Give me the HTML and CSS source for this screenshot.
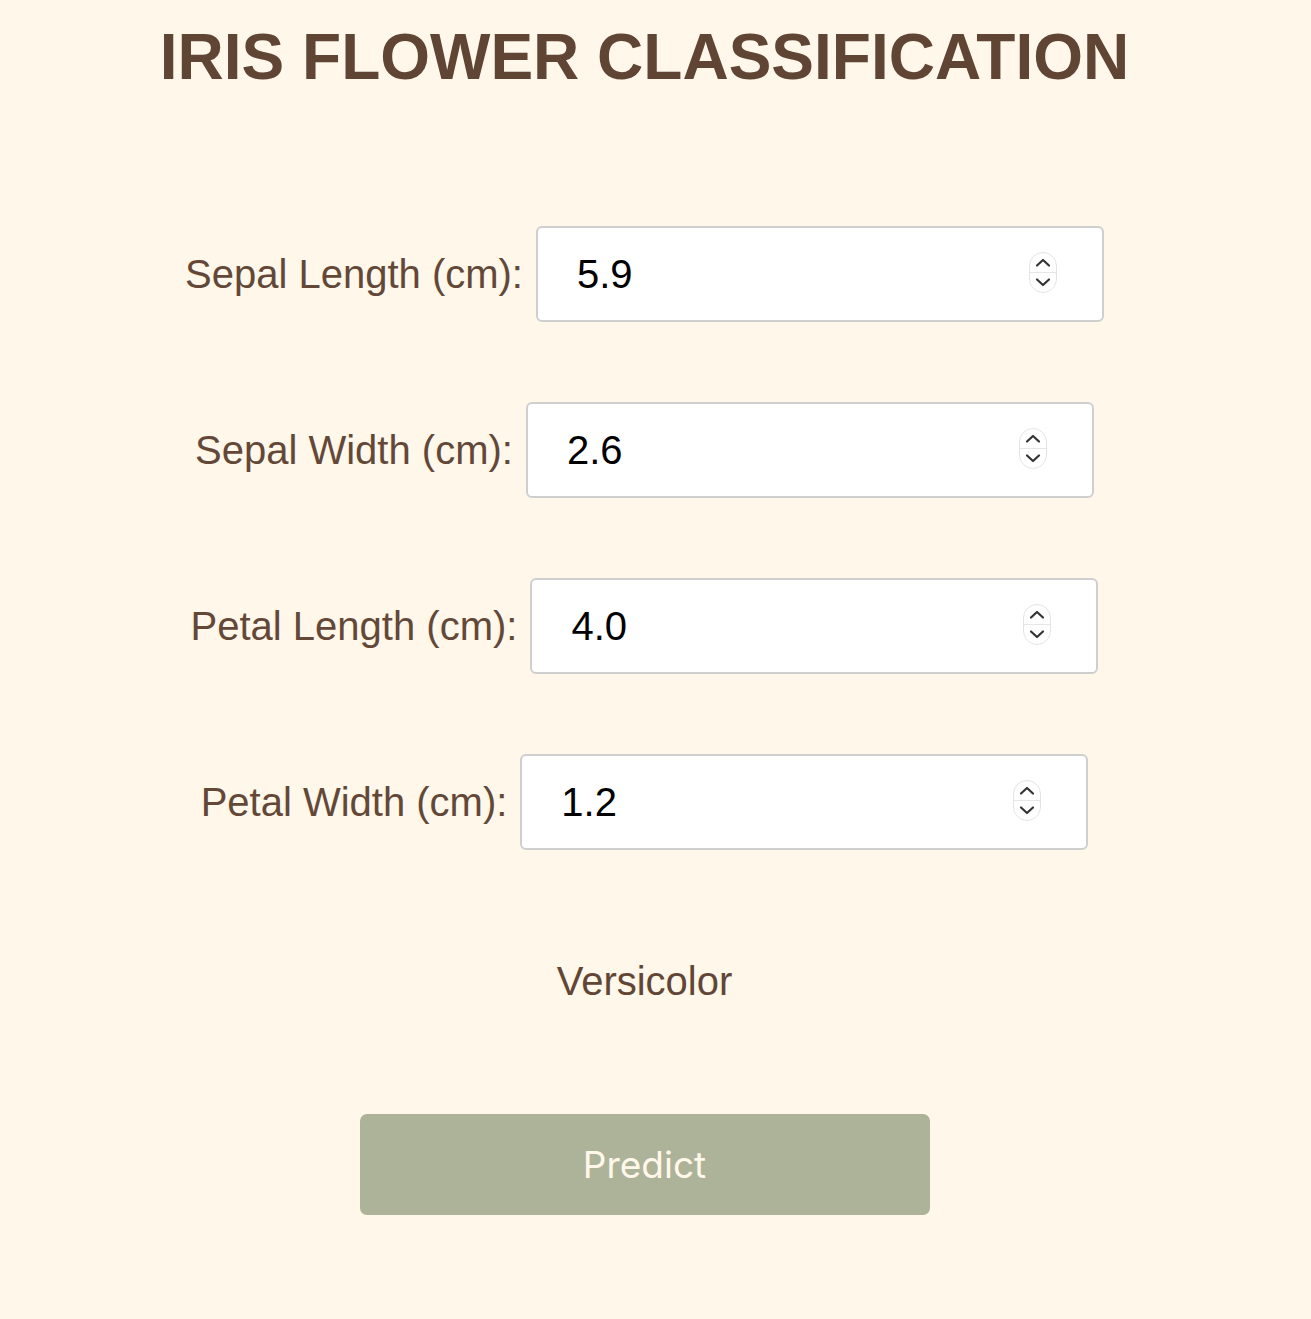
FILE: index.html
```html
<!DOCTYPE html>
<html lang="en">
<head>
<meta charset="utf-8">
<title>Iris Flower Classification</title>
<link rel="stylesheet" href="styles.css">
</head>
<body>
<main class="page">
  <h1 class="title">IRIS FLOWER CLASSIFICATION</h1>
  <form class="form">
    <div class="row">
      <label class="label" for="sl">Sepal Length (cm):</label>
      <div class="field">
        <input class="input" id="sl" type="number" step="0.1" value="5.9">
        <svg class="spin" width="28" height="41" viewBox="0 0 28 41" aria-hidden="true"><rect x="0.5" y="0.5" width="27" height="40" rx="13.5" fill="#fff" stroke="#e3e3e3"/><line x1="1" y1="20.5" x2="27" y2="20.5" stroke="#e6e6e6"/><polyline points="8,13.5 14,8 20,13.5" fill="none" stroke="#333" stroke-width="2.2" stroke-linecap="round" stroke-linejoin="round"/><polyline points="8,27.5 14,33 20,27.5" fill="none" stroke="#333" stroke-width="2.2" stroke-linecap="round" stroke-linejoin="round"/></svg>
      </div>
    </div>
    <div class="row">
      <label class="label" for="sw">Sepal Width (cm):</label>
      <div class="field">
        <input class="input" id="sw" type="number" step="0.1" value="2.6">
        <svg class="spin" width="28" height="41" viewBox="0 0 28 41" aria-hidden="true"><rect x="0.5" y="0.5" width="27" height="40" rx="13.5" fill="#fff" stroke="#e3e3e3"/><line x1="1" y1="20.5" x2="27" y2="20.5" stroke="#e6e6e6"/><polyline points="8,13.5 14,8 20,13.5" fill="none" stroke="#333" stroke-width="2.2" stroke-linecap="round" stroke-linejoin="round"/><polyline points="8,27.5 14,33 20,27.5" fill="none" stroke="#333" stroke-width="2.2" stroke-linecap="round" stroke-linejoin="round"/></svg>
      </div>
    </div>
    <div class="row">
      <label class="label" for="pl">Petal Length (cm):</label>
      <div class="field">
        <input class="input" id="pl" type="number" step="0.1" value="4.0">
        <svg class="spin" width="28" height="41" viewBox="0 0 28 41" aria-hidden="true"><rect x="0.5" y="0.5" width="27" height="40" rx="13.5" fill="#fff" stroke="#e3e3e3"/><line x1="1" y1="20.5" x2="27" y2="20.5" stroke="#e6e6e6"/><polyline points="8,13.5 14,8 20,13.5" fill="none" stroke="#333" stroke-width="2.2" stroke-linecap="round" stroke-linejoin="round"/><polyline points="8,27.5 14,33 20,27.5" fill="none" stroke="#333" stroke-width="2.2" stroke-linecap="round" stroke-linejoin="round"/></svg>
      </div>
    </div>
    <div class="row">
      <label class="label" for="pw">Petal Width (cm):</label>
      <div class="field">
        <input class="input" id="pw" type="number" step="0.1" value="1.2">
        <svg class="spin" width="28" height="41" viewBox="0 0 28 41" aria-hidden="true"><rect x="0.5" y="0.5" width="27" height="40" rx="13.5" fill="#fff" stroke="#e3e3e3"/><line x1="1" y1="20.5" x2="27" y2="20.5" stroke="#e6e6e6"/><polyline points="8,13.5 14,8 20,13.5" fill="none" stroke="#333" stroke-width="2.2" stroke-linecap="round" stroke-linejoin="round"/><polyline points="8,27.5 14,33 20,27.5" fill="none" stroke="#333" stroke-width="2.2" stroke-linecap="round" stroke-linejoin="round"/></svg>
      </div>
    </div>
  </form>
  <p class="result">Versicolor</p>
  <button class="btn" type="button">Predict</button>
</main>
</body>
</html>
```

FILE: styles.css
```css
html, body {
  margin: 0;
  padding: 0;
  background: #fef7ea;
}

body {
  font-family: "Liberation Sans", Arial, Helvetica, sans-serif;
  color: #614636;
}

.page {
  display: flex;
  flex-direction: column;
  align-items: center;
  padding-right: 22px;
  min-height: 1319px;
  box-sizing: border-box;
}

.title {
  margin: 25px 0 0;
  font-size: 64px;
  line-height: 1;
  font-weight: 700;
  color: #604535;
}

.form {
  margin-top: 137px;
  display: flex;
  flex-direction: column;
  gap: 80px;
}

.row {
  display: flex;
  justify-content: center;
  align-items: center;
  gap: 13px;
}

.label {
  font-size: 40px;
  color: #634838;
}

.field {
  position: relative;
  width: 568px;
  height: 96px;
}

.input {
  width: 100%;
  height: 100%;
  box-sizing: border-box;
  border: 2px solid #cfcfcf;
  border-radius: 6px;
  background: #fff;
  padding: 0 0 0 39px;
  font-family: "Liberation Sans", Arial, sans-serif;
  font-size: 40px;
  color: #000;
  outline: none;
  -moz-appearance: textfield;
}

.input::-webkit-inner-spin-button,
.input::-webkit-outer-spin-button {
  -webkit-appearance: none;
  margin: 0;
}

.spin {
  position: absolute;
  right: 47px;
  top: 26px;
}

.result {
  margin: 109px 0 0;
  font-size: 40px;
  color: #614636;
}

.btn {
  margin-top: 110px;
  width: 570px;
  height: 101px;
  border: none;
  border-radius: 7px;
  background: #adb399;
  color: #fff8ea;
  font-family: Inter, "Noto Sans", sans-serif;
  font-size: 37px;
  cursor: pointer;
}
```
